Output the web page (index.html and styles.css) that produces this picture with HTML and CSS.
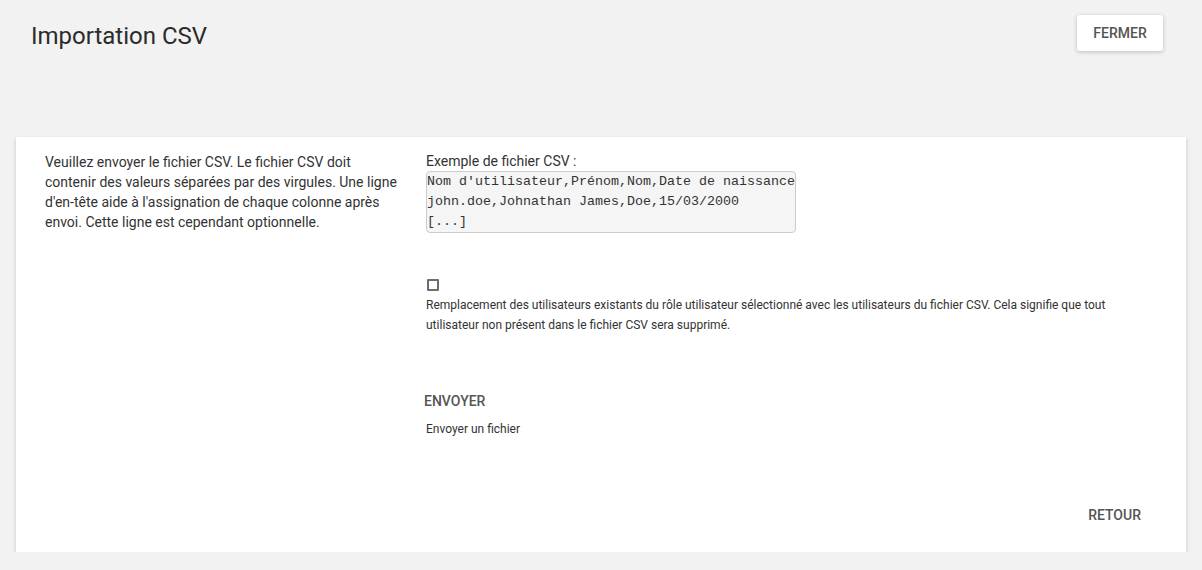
FILE: index.html
```html
<!DOCTYPE html>
<html lang="fr">
<head>
<meta charset="utf-8">
<title>Importation CSV</title>
<link rel="stylesheet" href="styles.css">
</head>
<body>
<header class="top">
  <h1 class="title">Importation CSV</h1>
  <button class="btn btn-raised">FERMER</button>
</header>
<section class="card">
  <div class="col-left">
    <p class="intro">Veuillez envoyer le fichier CSV. Le fichier CSV doit contenir des valeurs séparées par des virgules. Une ligne d'en-tête aide à l'assignation de chaque colonne après envoi. Cette ligne est cependant optionnelle.</p>
  </div>
  <div class="col-right">
    <div class="label">Exemple de fichier CSV :</div>
    <pre class="sample">Nom d'utilisateur,Prénom,Nom,Date de naissance
john.doe,Johnathan James,Doe,15/03/2000
[...]</pre>
    <span class="check" role="checkbox" aria-checked="false"></span>
    <p class="desc">Remplacement des utilisateurs existants du rôle utilisateur sélectionné avec les utilisateurs du fichier CSV. Cela signifie que tout utilisateur non présent dans le fichier CSV sera supprimé.</p>
    <button class="btn btn-flat btn-send">ENVOYER</button>
    <p class="hint">Envoyer un fichier</p>
  </div>
  <div class="footer">
    <button class="btn btn-flat">RETOUR</button>
  </div>
</section>
</body>
</html>
```

FILE: styles.css
```css
html, body {
  margin: 0;
  padding: 0;
  background: #f2f2f2;
  font-family: Roboto, "Liberation Sans", Arial, sans-serif;
  color: #333;
}

.top {
  display: flex;
  justify-content: space-between;
  align-items: flex-start;
  padding: 15px 39px 0 31px;
}

.title {
  margin: 3px 0 0 0;
  font-size: 24px;
  line-height: 36px;
  font-weight: 400;
  color: #2b2b2b;
}

.btn {
  font-family: Roboto, "Liberation Sans", Arial, sans-serif;
  font-size: 14px;
  font-weight: 500;
  color: #555;
  height: 36px;
  line-height: 36px;
  border: 0;
  background: transparent;
  padding: 0 8px;
  cursor: pointer;
  letter-spacing: 0;
}

.btn-raised {
  background: #fff;
  padding: 0 16px;
  border-radius: 3px;
  box-shadow: 0 1px 4px rgba(0,0,0,0.22);
  width: 86px;
}

.card {
  margin: 83px 16px 0 16px;
  background: #fff;
  box-shadow: 0 2px 4px rgba(0,0,0,0.18);
  display: grid;
  grid-template-columns: 358px 1fr;
  column-gap: 23px;
  padding: 15px 30px 19px 29px;
}

.intro {
  margin: 0;
  font-size: 14px;
  line-height: 20px;
  color: #333;
}

.label {
  font-size: 14px;
  line-height: 19px;
  color: #333;
}

.sample {
  margin: 0;
  width: 368px;
  font-family: "Liberation Mono", "Courier New", monospace;
  font-size: 13.33px;
  line-height: 20px;
  color: #333;
  background: #f5f5f5;
  border: 1px solid #ccc;
  border-radius: 4px;
  padding: 0;
  overflow: hidden;
}

.check {
  display: block;
  width: 8px;
  height: 8px;
  border: 2px solid #6d6d6d;
  border-radius: 1px;
  margin: 46px 0 4px 1px;
}

.desc {
  margin: 0;
  font-size: 12px;
  line-height: 20px;
  color: #333;
}

.btn-send {
  display: block;
  margin: 48px 0 0 -2px;
  padding: 0;
}

.hint {
  margin: 0;
  font-size: 12px;
  line-height: 20px;
  color: #333;
}

.footer {
  grid-column: 1 / -1;
  display: flex;
  justify-content: flex-end;
  margin-top: 58px;
  padding-right: 7px;
}
```
